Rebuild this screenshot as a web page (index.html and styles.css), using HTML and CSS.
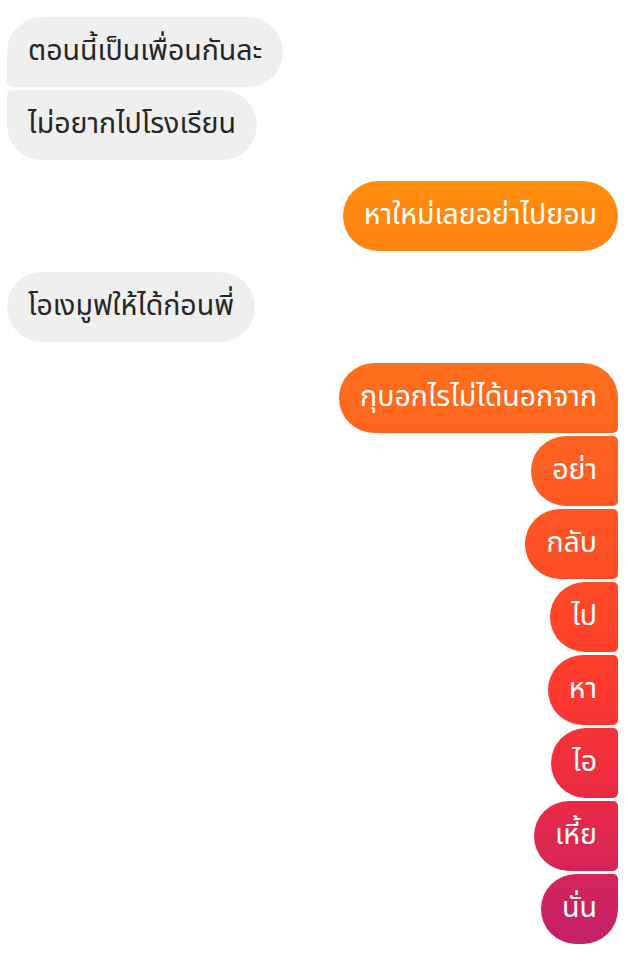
FILE: index.html
```html
<!DOCTYPE html>
<html lang="th">
<head>
    <meta charset="UTF-8">
    <meta name="viewport" content="width=device-width, initial-scale=1.0">
    <title>Chat</title>
    <link rel="stylesheet" href="styles.css">
</head>
<body>
    <div class="chat">
        <div class="group them">
            <div class="bubble">ตอนนี้เป็นเพื่อนกันละ</div>
            <div class="bubble">ไม่อยากไปโรงเรียน</div>
        </div>
        <div class="group me">
            <div class="bubble">หาใหม่เลยอย่าไปยอม</div>
        </div>
        <div class="group them">
            <div class="bubble">โอเงมูฟให้ได้ก่อนพี่</div>
        </div>
        <div class="group me">
            <div class="bubble">กุบอกไรไม่ได้นอกจาก</div>
            <div class="bubble">อย่า</div>
            <div class="bubble">กลับ</div>
            <div class="bubble">ไป</div>
            <div class="bubble">หา</div>
            <div class="bubble">ไอ</div>
            <div class="bubble">เหี้ย</div>
            <div class="bubble">นั่น</div>
        </div>
    </div>
</body>
</html>
```

FILE: styles.css
```css
body {
    margin: 0;
    background-color: #fff;
    font-family: 'Noto Sans Thai', 'Noto Sans', 'Open Sans', sans-serif;
}
.chat {
    display: flex;
    flex-direction: column;
    gap: 21px;
    padding: 17px 10px 20px 7px;
}
.group {
    display: flex;
    flex-direction: column;
    gap: 3px;
}
.bubble {
    font-size: 28.5px;
    line-height: 36px;
    padding: 17px 21px;
    border-radius: 35px;
}
.them {
    align-items: flex-start;
}
.them .bubble {
    background-color: #efefef;
    color: #262626;
}
.them .bubble:not(:last-child) {
    border-bottom-left-radius: 5px;
}
.them .bubble:not(:first-child) {
    border-top-left-radius: 5px;
}
.me {
    align-items: flex-end;
}
.me .bubble {
    color: #fff;
    background-image: linear-gradient(180deg, #ff9a06 0px, #ff8c0f 190px, #fd6a1e 400px, #fd3a2c 680px, #e92a45 800px, #c62068 930px, #bd1f72 965px);
    background-attachment: fixed;
}
.me .bubble:not(:last-child) {
    border-bottom-right-radius: 5px;
}
.me .bubble:not(:first-child) {
    border-top-right-radius: 5px;
}
```
